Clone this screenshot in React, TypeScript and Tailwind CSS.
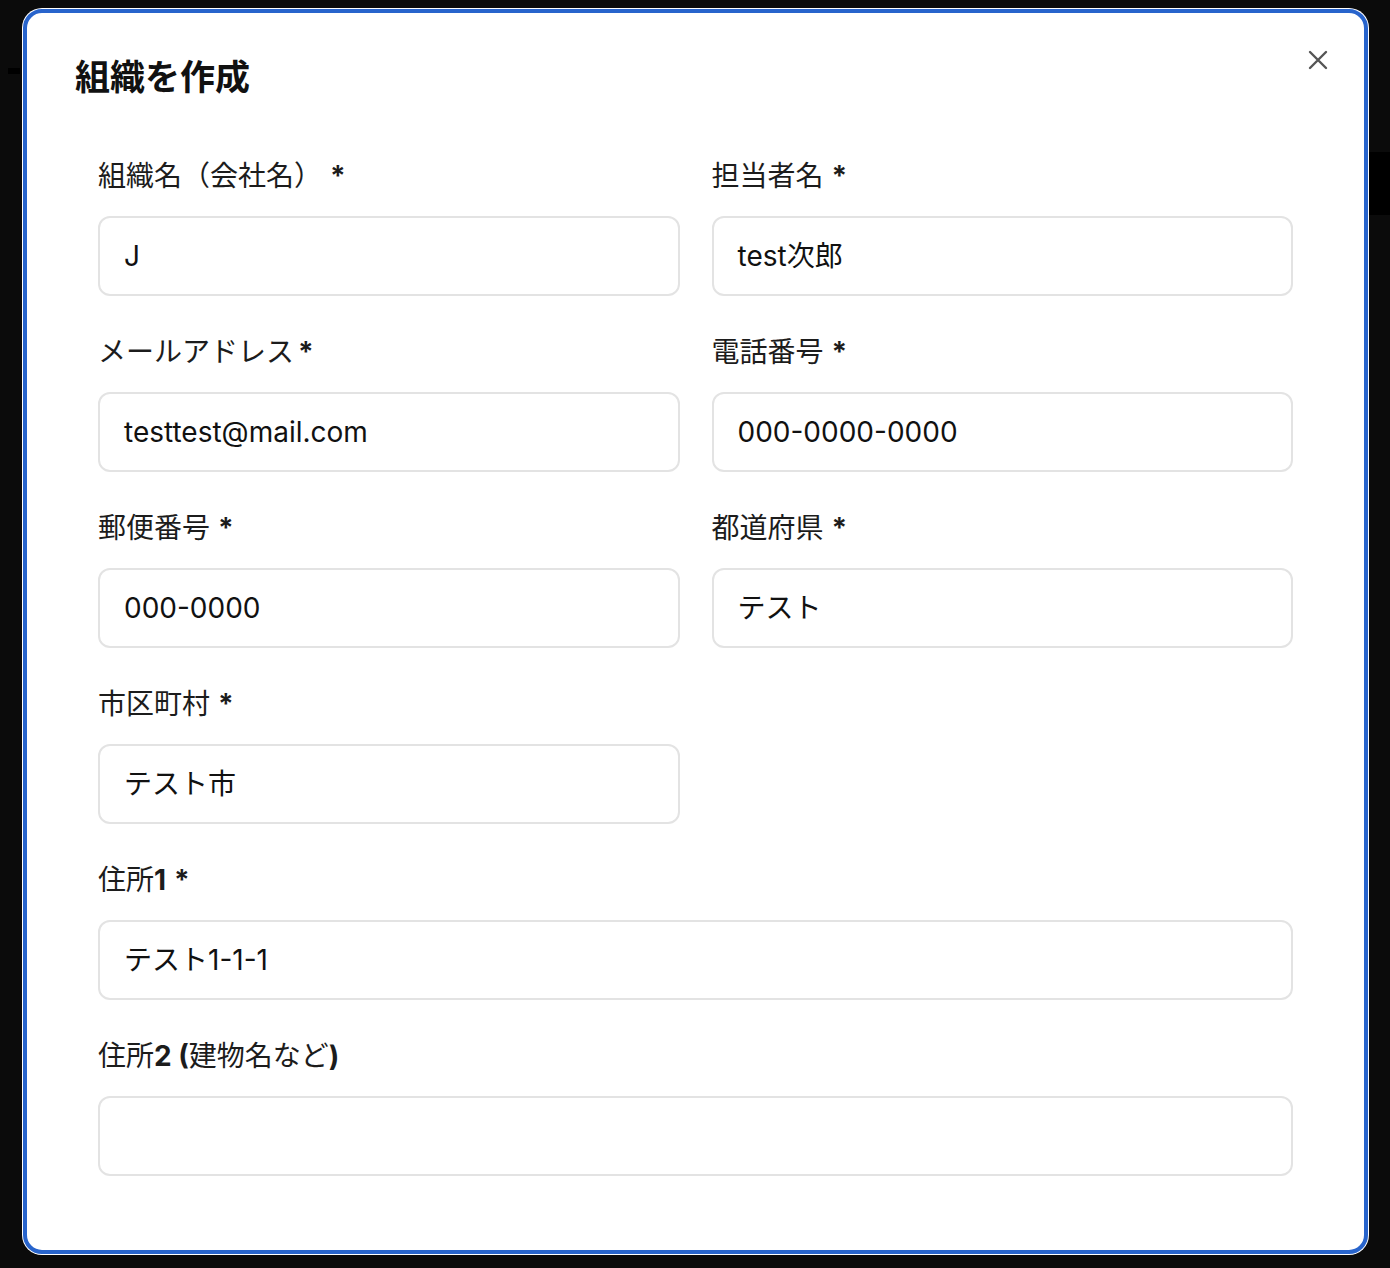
import React from "react";

const font = "font-['Inter','Noto_Sans_CJK_JP',sans-serif]";

type Field = {
  label: React.ReactNode;
  value: string;
  wide?: boolean;
};

const Req = ({ gap = "ml-[8px]" }: { gap?: string }) => (
  <span className={`font-bold ${gap}`}>*</span>
);

const fields: Field[] = [
  { label: <>組織名（会社名） <Req gap="ml-0" /></>, value: "J" },
  { label: <>担当者名<Req /></>, value: "test次郎" },
  { label: <>メールアドレス<Req gap="ml-[4px]" /></>, value: "testtest@mail.com" },
  { label: <>電話番号<Req /></>, value: "000-0000-0000" },
  { label: <>郵便番号<Req /></>, value: "000-0000" },
  { label: <>都道府県<Req /></>, value: "テスト" },
  { label: <>市区町村<Req /></>, value: "テスト市" },
  { label: <>住所<span className="font-bold">1</span><Req /></>, value: "テスト1-1-1", wide: true },
  { label: <>住所<span className="font-bold">2 (</span>建物名など<span className="font-bold">)</span></>, value: "", wide: true },
];

function FormField({ field }: { field: Field }) {
  return (
    <div className={field.wide ? "col-span-2" : ""}>
      <label className="block h-[40px] leading-[40px] text-[28px] text-[#1c1c1c] whitespace-nowrap">
        {field.label}
      </label>
      <div className="mt-[20px] h-[80px] rounded-[12px] border-2 border-[#e3e3e3] bg-white px-[24px] flex items-center">
        <span className="text-[28px] text-[#111]">{field.value}</span>
      </div>
    </div>
  );
}

export default function App() {
  return (
    <div className={`relative min-h-screen bg-[#0b0b0b] pt-[8px] pl-[22px] ${font}`}>
      {/* page behind overlay */}
      <div className="absolute right-0 top-[152px] w-[22px] h-[63px] bg-black" />
      <div className="absolute left-[8px] top-[68px] w-[12px] h-[6px] bg-black" />

      <div className="relative w-[1347px] rounded-[20px] bg-white p-[1px]">
        <div className="relative rounded-[19px] border-4 border-[#2864cc] bg-white pt-[40px] pb-[74px]">
          <h2 className="pl-[48px] text-[35px] leading-[48px] font-bold text-[#111]">組織を作成</h2>

          <button className="absolute right-[34px] top-[35px] p-[2px] text-[#555]">
            <svg width="20" height="20" viewBox="0 0 20 20" fill="none" stroke="currentColor" strokeWidth="2.4" strokeLinecap="round">
              <path d="M2 2l16 16M18 2 2 18" />
            </svg>
          </button>

          <form className="mt-[55px] mx-[71px] grid grid-cols-2 gap-x-[32px] gap-y-[36px]">
            {fields.map((f, i) => (
              <React.Fragment key={i}>
                <FormField field={f} />
                {i === 6 && <div />}
              </React.Fragment>
            ))}
          </form>
        </div>
      </div>
    </div>
  );
}
